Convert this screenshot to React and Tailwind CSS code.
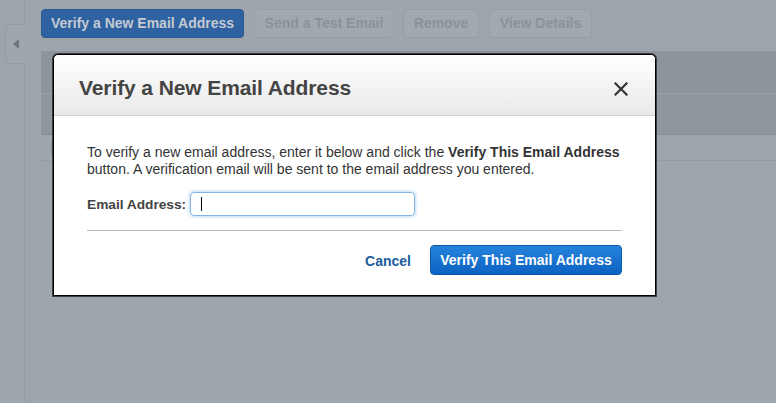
export default function App() {
  const font = { fontFamily: '"Liberation Sans", Arial, Helvetica, sans-serif' };
  return (
    <div className="relative w-[776px] h-[403px] overflow-hidden bg-[#9fa5ac] flex" style={font}>
      {/* Sidebar */}
      <div className="w-[25px] shrink-0 border-r border-[#959ba2] relative">
        <div className="absolute left-[5px] top-[24px] w-[21px] h-[40px] rounded-l-[5px] border border-r-0 border-[#959ba2] bg-[#a0a6ad] flex items-center justify-center">
          <svg width="7" height="10" viewBox="0 0 7 10"><polygon points="6,0 6,10 0,5" fill="#6e747b" /></svg>
        </div>
      </div>
      {/* Main */}
      <div className="flex-1 flex flex-col pl-[16px] pt-[9px]">
        <div className="flex h-[29px]">
          <div className="w-[203px] h-[29px] rounded-[4px] bg-[#2f62a0] border border-[#2a5891] text-[#c4cad3] font-bold text-[14px] flex items-center justify-center">Verify a New Email Address</div>
          <div className="ml-[10px] w-[140px] h-[29px] rounded-[4px] bg-[#a2a8af] border border-[#979da4] text-[#8c9299] font-bold text-[14px] flex items-center justify-center">Send a Test Email</div>
          <div className="ml-[9px] w-[76px] h-[29px] rounded-[4px] bg-[#a2a8af] border border-[#979da4] text-[#8c9299] font-bold text-[14px] flex items-center justify-center">Remove</div>
          <div className="ml-[10px] w-[103px] h-[29px] rounded-[4px] bg-[#a2a8af] border border-[#979da4] text-[#8c9299] font-bold text-[14px] flex items-center justify-center">View Details</div>
        </div>
        <div className="mt-[13px] flex flex-col">
          <div className="h-[43px] bg-[#8e949b] border-b border-[#9aa0a7]"></div>
          <div className="h-[41px] bg-[#90969d] border-b border-[#868c93]"></div>
          <div className="h-[26px] border-b border-[#959ba2] flex items-center pl-[10px]">
            <div className="w-[6px] h-[14px] rounded-l-[3px] border border-r-0 border-[#8a9097]"></div>
          </div>
        </div>
      </div>

      {/* Modal */}
      <div className="absolute left-[53px] top-[54px] w-[603px] h-[242px] bg-white border border-black rounded-t-[5px] shadow-[0_0_0_1px_rgba(0,0,0,0.6)] flex flex-col">
        <div className="h-[61px] shrink-0 rounded-t-[5px] bg-gradient-to-b from-[#ffffff] to-[#e9e9e9] border-b border-[#cfcfcf] flex items-center justify-between pl-[25px] pr-[27px]">
          <div className="text-[21px] font-bold text-[#444444] tracking-[-0.1px] mt-[5px]">Verify a New Email Address</div>
          <svg width="14" height="14" viewBox="0 0 14 14" className="mt-[7px]">
            <path d="M1.5 1.5 L12.5 12.5 M12.5 1.5 L1.5 12.5" stroke="#333" strokeWidth="2.2" strokeLinecap="square" />
          </svg>
        </div>
        <div className="px-[33px] pt-[28px] text-[14px] leading-[17px] text-[#333333]">
          <p>
            To verify a new email address, enter it below and click the <b>Verify This Email Address</b> button. A verification email will be sent to the email address you entered.
          </p>
          <div className="mt-[14px] flex items-center">
            <span className="font-bold text-[#444444] text-[13.7px] mr-[4px]">Email Address:</span>
            <div className="w-[225px] h-[24px] rounded-[4px] border border-[#86b6e6] shadow-[0_0_3px_1px_rgba(110,170,230,0.45)] flex items-center pl-[10px]">
              <div className="w-[1px] h-[14px] bg-black"></div>
            </div>
          </div>
          <div className="mt-[14px] border-t border-[#bcbcbc]"></div>
          <div className="mt-[14px] flex items-center justify-end">
            <span className="text-[14px] font-bold text-[#1b5c9e] mr-[19px] mt-[3px]">Cancel</span>
            <div className="w-[192px] h-[30px] rounded-[4px] bg-gradient-to-b from-[#2583dc] to-[#0c62c2] border border-[#0b58ab] text-white font-bold text-[14px] flex items-center justify-center">Verify This Email Address</div>
          </div>
        </div>
      </div>
    </div>
  );
}
